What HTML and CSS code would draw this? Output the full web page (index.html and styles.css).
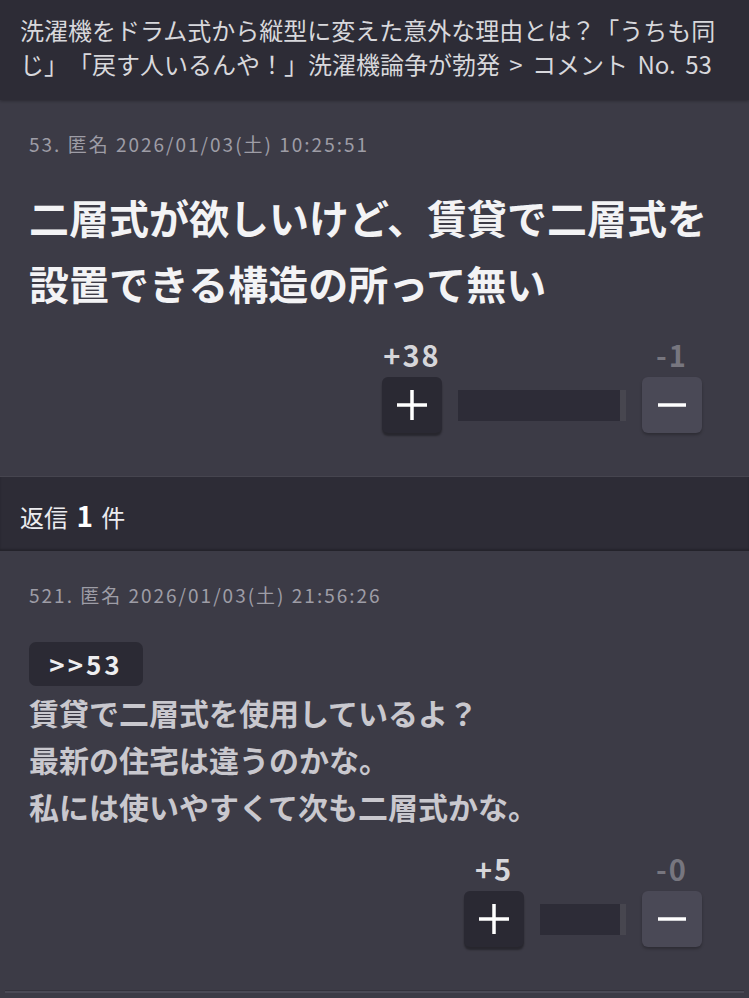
FILE: index.html
```html
<!DOCTYPE html>
<html lang="ja">
<head>
<meta charset="utf-8">
<title>コメント No. 53</title>
<link rel="stylesheet" href="styles.css">
</head>
<body>
<header class="page-title">洗濯機をドラム式から縦型に変えた意外な理由とは？「うちも同じ」「戻す人いるんや！」洗濯機論争が勃発 &gt; コメント No. 53</header>

<article class="card">
  <div class="meta">53. 匿名 2026/01/03(土) 10:25:51</div>
  <p class="main-text">二層式が欲しいけど、賃貸で二層式を設置できる構造の所って無い</p>
  <div class="vote">
    <div class="vote-col">
      <span class="count count-up">+38</span>
      <button class="btn btn-plus" aria-label="プラス">
        <svg width="30" height="30" viewBox="0 0 30 30"><path d="M15 0V30M0 15H30" stroke="#fff" stroke-width="3.5" fill="none"/></svg>
      </button>
    </div>
    <div class="bar" style="width:168px"></div>
    <div class="vote-col">
      <span class="count count-down">-1</span>
      <button class="btn btn-minus" aria-label="マイナス">
        <svg width="30" height="30" viewBox="0 0 30 30"><path d="M1 15H29" stroke="#fff" stroke-width="3.5" fill="none"/></svg>
      </button>
    </div>
  </div>
</article>

<div class="reply-head">返信 <b>1</b> 件</div>

<article class="card card-reply">
  <div class="meta">521. 匿名 2026/01/03(土) 21:56:26</div>
  <a class="quote">&gt;&gt;53</a>
  <p class="reply-text">賃貸で二層式を使用しているよ？<br>最新の住宅は違うのかな。<br>私には使いやすくて次も二層式かな。</p>
  <div class="vote">
    <div class="vote-col">
      <span class="count count-up">+5</span>
      <button class="btn btn-plus" aria-label="プラス">
        <svg width="30" height="30" viewBox="0 0 30 30"><path d="M15 0V30M0 15H30" stroke="#fff" stroke-width="3.5" fill="none"/></svg>
      </button>
    </div>
    <div class="bar" style="width:86px"></div>
    <div class="vote-col">
      <span class="count count-down">-0</span>
      <button class="btn btn-minus" aria-label="マイナス">
        <svg width="30" height="30" viewBox="0 0 30 30"><path d="M1 15H29" stroke="#fff" stroke-width="3.5" fill="none"/></svg>
      </button>
    </div>
  </div>
</article>
<div class="next-edge"></div>
</body>
</html>
```
FILE: styles.css
```css
html, body {
  margin: 0;
  padding: 0;
}
body {
  background: #3c3b46;
  font-family: "Noto Sans CJK JP", "Noto Sans", sans-serif;
  color: #e8e8ec;
}
.page-title {
  background: #2d2c36;
  color: #d8d8dc;
  font-size: 24px;
  line-height: 34px;
  padding: 13px 20px 19px;
  box-shadow: 0 1px 3px rgba(0, 0, 0, 0.3);
  position: relative;
  text-spacing-trim: space-all;
  word-spacing: 4px;
}
.card {
  padding: 32px 29px 43px;
}
.meta {
  font-size: 19px;
  line-height: 24px;
  color: #9e9da6;
  letter-spacing: 2px;
}
.main-text {
  margin: 28px 0 0;
  font-size: 40px;
  line-height: 66px;
  font-weight: 700;
  color: #f3f3f5;
}
.vote {
  display: flex;
  justify-content: flex-end;
  align-items: flex-end;
  gap: 16px;
  margin-top: 23px;
  padding-right: 18px;
}
.vote-col {
  display: flex;
  flex-direction: column;
  align-items: center;
  gap: 8px;
}
.count {
  font-size: 29px;
  line-height: 30px;
  font-weight: 700;
  letter-spacing: 2px;
}
.count-up {
  color: #d6d6da;
}
.count-down {
  color: #77767f;
}
.btn {
  width: 60px;
  height: 56px;
  border: 0;
  border-radius: 6px;
  padding: 0;
  display: flex;
  align-items: center;
  justify-content: center;
}
.btn-plus {
  background: #2a2933;
  box-shadow: 0 3px 2px rgba(0, 0, 0, 0.35);
}
.btn-minus {
  background: #4a4956;
  box-shadow: 0 2px 3px rgba(0, 0, 0, 0.25);
}
.bar {
  height: 31px;
  margin-bottom: 12px;
  background: #2d2c37;
  border-right: 6px solid #47464f;
  box-sizing: border-box;
}
.reply-head {
  background: #2d2c36;
  border-top: 1px solid #46454f;
  box-shadow: inset 0 -2px 2px rgba(0, 0, 0, 0.2);
  font-size: 24px;
  line-height: 34px;
  padding: 21px 20px 17px;
  color: #ececef;
}
.reply-head b {
  font-weight: 700;
  font-size: 28px;
  margin: 0 3px;
  color: #fff;
}
.card-reply .meta {
  margin-bottom: 35px;
}
.quote {
  display: inline-block;
  background: #2b2a34;
  border-radius: 7px;
  color: #eeeef0;
  font-size: 26px;
  font-weight: 700;
  line-height: 44px;
  width: 114px;
  text-align: center;
  letter-spacing: 3px;
}
.reply-text {
  margin: 3px 0 0;
  font-size: 30px;
  line-height: 47px;
  font-weight: 700;
  color: #c9c8ce;
}
.next-edge {
  margin: 0 5px;
  height: 2px;
  background: #4b4a56;
  border-top: 1px solid #33323c;
}
```
